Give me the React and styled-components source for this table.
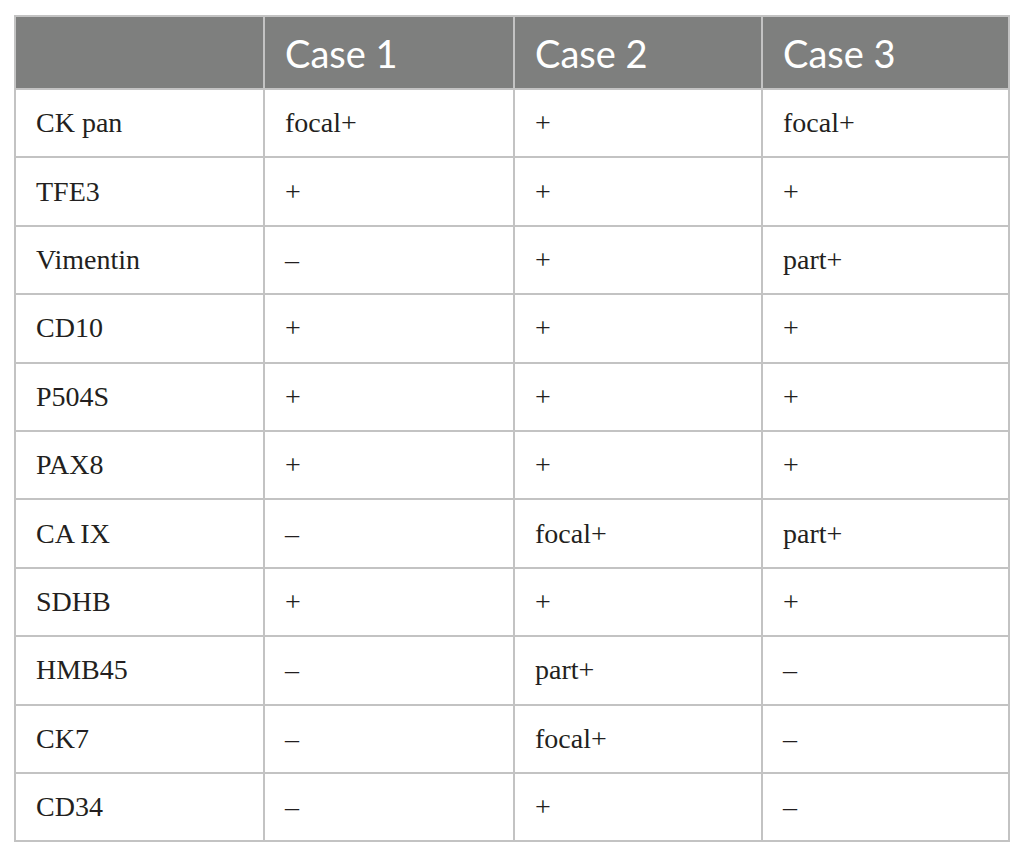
import styled, { createGlobalStyle } from "styled-components";

const GlobalStyle = createGlobalStyle`
  html, body {
    margin: 0;
    padding: 0;
    background: #ffffff;
  }
`;

const Page = styled.div`
  padding: 15px 16px 0 14px;
`;

const Table = styled.table`
  width: 994px;
  border-collapse: collapse;
  table-layout: fixed;
  border: 2px solid #c3c3c3;
`;

const Col = styled.col`
  width: ${p => p.$w}px;
`;

const HeadCell = styled.th`
  height: 71px;
  padding: 0 0 0 20px;
  background: #7e7f7e;
  color: #ffffff;
  font-family: Lato, "Open Sans", sans-serif;
  font-size: 38px;
  font-weight: 400;
  text-align: left;
  border: 2px solid #c3c3c3;
  border-top: none;
  border-bottom: none;
`;

const Cell = styled.td`
  height: 66.4px;
  padding: 0 0 0 20px;
  color: #231f20;
  font-family: "Liberation Serif", "DejaVu Serif", serif;
  font-size: 28px;
  border: 2px solid #c3c3c3;
  vertical-align: middle;
`;

const widths = [249, 250, 248, 247];
const cases = ["Case 1", "Case 2", "Case 3"];

const rows = [
  ["CK pan", "focal+", "+", "focal+"],
  ["TFE3", "+", "+", "+"],
  ["Vimentin", "–", "+", "part+"],
  ["CD10", "+", "+", "+"],
  ["P504S", "+", "+", "+"],
  ["PAX8", "+", "+", "+"],
  ["CA IX", "–", "focal+", "part+"],
  ["SDHB", "+", "+", "+"],
  ["HMB45", "–", "part+", "–"],
  ["CK7", "–", "focal+", "–"],
  ["CD34", "–", "+", "–"],
];

const App = () => {
  return (
    <>
      <GlobalStyle />
      <Page>
        <Table>
          <colgroup>
            {widths.map((w, i) => (
              <Col key={i} $w={w} />
            ))}
          </colgroup>
          <thead>
            <tr>
              <HeadCell />
              {cases.map(c => (
                <HeadCell key={c}>{c}</HeadCell>
              ))}
            </tr>
          </thead>
          <tbody>
            {rows.map(row => (
              <tr key={row[0]}>
                {row.map((v, i) => (
                  <Cell key={i}>{v}</Cell>
                ))}
              </tr>
            ))}
          </tbody>
        </Table>
      </Page>
    </>
  );
};

export default App;
